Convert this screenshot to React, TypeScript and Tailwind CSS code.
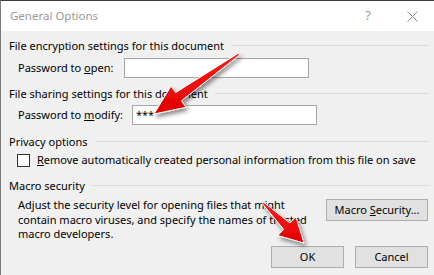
import React from "react";

const font = { fontFamily: '"Noto Sans", "Open Sans", sans-serif' };

function Header({ text }: { text: string }) {
  return (
    <div className="flex items-center h-[15px] pl-[8px] pr-[5px]">
      <span className="text-[11px] leading-[15px] text-black whitespace-nowrap">{text}</span>
      <div className="flex-1 h-px bg-[#dadada] ml-[7px]" />
    </div>
  );
}

function Btn({ children, w }: { children: React.ReactNode; w: string }) {
  return (
    <div
      className={`${w} h-[22px] border border-[#adadad] bg-[#e1e1e1] flex items-center justify-center text-[11px] text-black`}
    >
      <span className="whitespace-nowrap">{children}</span>
    </div>
  );
}

export default function App() {
  return (
    <div
      className="relative w-[434px] h-[275px] overflow-hidden bg-[#f0f0f0] border-t border-l border-t-[#3a3a3a] border-l-[#7a7a7a] flex flex-col"
      style={font}
    >
      {/* title bar */}
      <div className="h-[30px] bg-white flex items-center pl-[9px] pr-[16px] shrink-0">
        <span className="text-[11.5px] text-[#9a9a9a] flex-1">General Options</span>
        <span className="text-[13px] text-[#9a9a9a] mr-[36px]">?</span>
        <svg width="11" height="11" viewBox="0 0 11 11">
          <path d="M0.5 0.5 L10.5 10.5 M10.5 0.5 L0.5 10.5" stroke="#8a8a8a" strokeWidth="1" />
        </svg>
      </div>

      {/* body */}
      <div className="flex flex-col pt-[7px]">
        <Header text="File encryption settings for this document" />
        <div className="flex items-center mt-[5px] pl-[17px] h-[20px]">
          <span className="w-[106px] text-[11px] whitespace-nowrap">
            Password to <u>o</u>pen:
          </span>
          <div className="w-[185px] h-[20px] bg-white border border-[#a6a6a6]" />
        </div>

        <div className="mt-[8px]">
          <Header text="File sharing settings for this document" />
        </div>
        <div className="flex items-center mt-[4px] pl-[17px] h-[20px]">
          <span className="w-[114px] text-[11px] whitespace-nowrap">
            Password to <u>m</u>odify:
          </span>
          <div className="w-[185px] h-[20px] bg-white border border-[#a6a6a6] flex items-center pl-[3px] text-[11px]">
            ***
          </div>
        </div>

        <div className="mt-[9px]">
          <Header text="Privacy options" />
        </div>
        <div className="flex items-center mt-[5px] pl-[16px] h-[13px]">
          <div className="w-[13px] h-[13px] bg-white border border-[#333] shrink-0" />
          <span className="ml-[7px] text-[11px] whitespace-nowrap">
            <u>R</u>emove automatically created personal information from this file on save
          </span>
        </div>

        <div className="mt-[11px]">
          <Header text="Macro security" />
        </div>
        <div className="flex items-start mt-[5px] pl-[17px] pr-[6px] h-[44px]">
          <div className="flex-1 text-[11px] leading-[14.5px]">
            <div className="whitespace-nowrap">Adjust the security level for opening files that might</div>
            <div className="whitespace-nowrap">contain macro viruses, and specify the names of trusted</div>
            <div className="whitespace-nowrap">macro developers.</div>
          </div>
          <div className="mt-[1px]">
            <Btn w="w-[102px]">
              Macro <u>S</u>ecurity...
            </Btn>
          </div>
        </div>
        <div className="flex justify-end gap-[11px] pr-[6px] mt-[4px]">
          <Btn w="w-[73px]">OK</Btn>
          <Btn w="w-[73px]">Cancel</Btn>
        </div>
      </div>

      {/* arrows overlay */}
      <svg className="absolute left-0 top-0 pointer-events-none" width="434" height="275">
        <defs>
          <filter id="sh" x="-30%" y="-30%" width="160%" height="160%">
            <feDropShadow dx="2" dy="3" stdDeviation="2" floodColor="#000" floodOpacity="0.45" />
          </filter>
          <linearGradient id="rg1" x1="0" y1="0" x2="0" y2="1">
            <stop offset="0" stopColor="#ff1a1a" />
            <stop offset="1" stopColor="#e00000" />
          </linearGradient>
        </defs>
        <polygon
          points="238.6,53.8 180.4,99.8 185,106.3 153,113 170,85.1 174.6,91.6 237.4,52.2"
          fill="url(#rg1)"
          stroke="#fff"
          strokeWidth="1"
          strokeLinejoin="round"
          filter="url(#sh)"
        />
        <polygon
          points="261.3,202.7 282.7,228.4 276.7,234.5 303,242 294.9,215.9 288.9,222 262.7,201.3"
          fill="url(#rg1)"
          stroke="#fff"
          strokeWidth="1"
          strokeLinejoin="round"
          filter="url(#sh)"
        />
      </svg>
    </div>
  );
}
